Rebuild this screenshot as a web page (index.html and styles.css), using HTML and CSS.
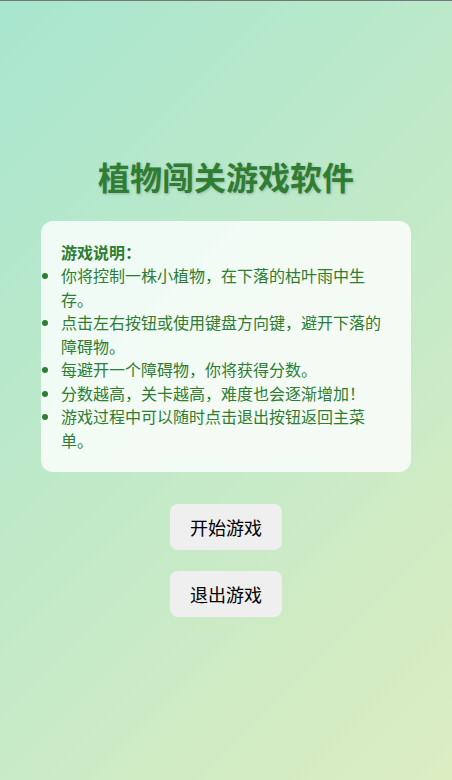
FILE: index.html
```html
<!DOCTYPE html>
<html lang="zh-CN">
<head>
    <meta charset="UTF-8">
    <meta name="viewport" content="width=device-width, initial-scale=1.0">
    <title>植物闯关游戏软件</title>
    <link rel="stylesheet" href="styles.css">
</head>
<body>
    <div class="menu">
        <h1 class="title">植物闯关游戏软件</h1>
        <div class="rules">
            <p class="rules-head">游戏说明：</p>
            <ul class="rules-list">
                <li>你将控制一株小植物，在下落的枯叶雨中生存。</li>
                <li>点击左右按钮或使用键盘方向键，避开下落的障碍物。</li>
                <li>每避开一个障碍物，你将获得分数。</li>
                <li>分数越高，关卡越高，难度也会逐渐增加！</li>
                <li>游戏过程中可以随时点击退出按钮返回主菜单。</li>
            </ul>
        </div>
        <div class="btns">
            <button class="btn" id="start">开始游戏</button>
            <button class="btn" id="quit">退出游戏</button>
        </div>
    </div>
</body>
</html>
```
FILE: styles.css
```css
html {
    border-top: 1px solid #777;
}
body {
    margin: 0;
    box-sizing: border-box;
    min-height: calc(100vh - 1px);
    padding-bottom: 11px;
    background: linear-gradient(135deg, #a8e6cf, #dcedc1);
    font-family: "Noto Sans CJK SC", "Noto Sans", sans-serif;
    display: flex;
    align-items: center;
    justify-content: center;
}
.menu {
    display: flex;
    flex-direction: column;
    align-items: center;
    width: 370px;
}
.title {
    color: #2e7d32;
    font-size: 32px;
    margin: 0 0 22px;
    text-shadow: 1px 1px 3px rgba(0, 0, 0, 0.2);
}
.rules {
    box-sizing: border-box;
    width: 370px;
    padding: 20px;
    background-color: rgba(255, 255, 255, 0.8);
    border-radius: 12px;
    color: #2e7d32;
    font-size: 16px;
    line-height: 23.5px;
    margin-bottom: 32px;
}
.rules-head {
    margin: 0;
    font-weight: bold;
}
.rules-list {
    margin: 0;
    padding-left: 0;
}
.btns {
    display: flex;
    flex-direction: column;
    align-items: center;
    gap: 21px;
}
.btn {
    font-family: "Noto Sans CJK SC", sans-serif;
    font-size: 18px;
    padding: 10px 20px;
    border: none;
    border-radius: 8px;
    background-color: #efefef;
    color: #000;
}
```
